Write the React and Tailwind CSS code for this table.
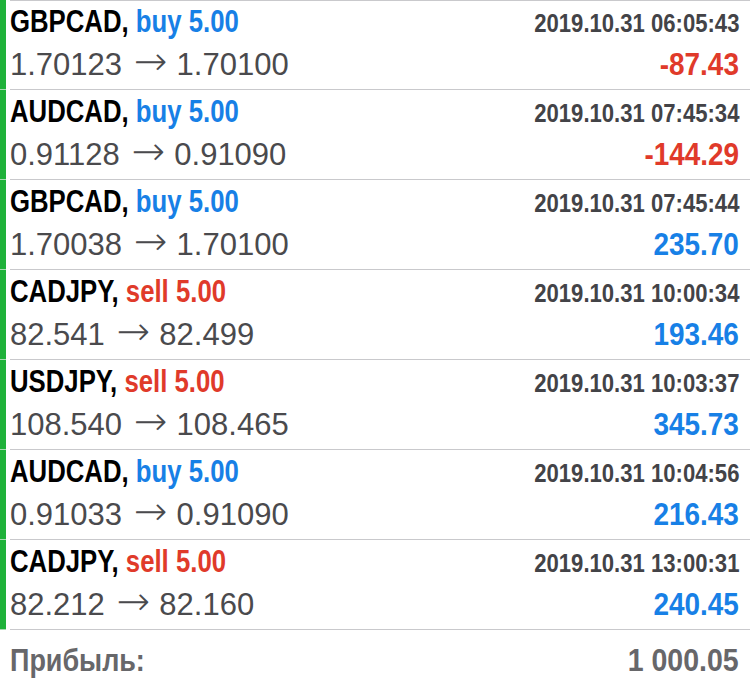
import React from 'react';

const trades = [
  { sym: 'GBPCAD', side: 'buy', open: '1.70123', close: '1.70100', time: '2019.10.31 06:05:43', profit: '-87.43' },
  { sym: 'AUDCAD', side: 'buy', open: '0.91128', close: '0.91090', time: '2019.10.31 07:45:34', profit: '-144.29' },
  { sym: 'GBPCAD', side: 'buy', open: '1.70038', close: '1.70100', time: '2019.10.31 07:45:44', profit: '235.70' },
  { sym: 'CADJPY', side: 'sell', open: '82.541', close: '82.499', time: '2019.10.31 10:00:34', profit: '193.46' },
  { sym: 'USDJPY', side: 'sell', open: '108.540', close: '108.465', time: '2019.10.31 10:03:37', profit: '345.73' },
  { sym: 'AUDCAD', side: 'buy', open: '0.91033', close: '0.91090', time: '2019.10.31 10:04:56', profit: '216.43' },
  { sym: 'CADJPY', side: 'sell', open: '82.212', close: '82.160', time: '2019.10.31 13:00:31', profit: '240.45' },
];

// bold "condensed" look: Liberation Sans Bold squeezed horizontally
const bold = "font-['Liberation_Sans',Arial,sans-serif] font-bold whitespace-nowrap";

const TradeRow = ({ t }) => {
  const loss = t.profit.startsWith('-');
  return (
    <div className="flex h-[90px]">
      <div className="w-[6px] shrink-0 bg-[#1fb23a] border-b border-[#a6dcb0]" />
      <div className="flex-1 ml-[4px] border-b border-[#c9c9cc] pr-[11px]">
        <div className="flex items-baseline justify-between leading-[42px] pt-[1px]">
          <span className={`${bold} inline-block origin-left scale-x-[0.83] text-[31px] text-black`}>
            {t.sym},{' '}
            <span className={t.side === 'buy' ? 'text-[#1780e6]' : 'text-[#e03a2a]'}>{t.side} 5.00</span>
          </span>
          <span className={`${bold} inline-block origin-right scale-x-[0.85] text-[26px] text-[#434347]`}>{t.time}</span>
        </div>
        <div className="flex items-baseline justify-between leading-[42px]">
          <div className="font-['Liberation_Sans',Arial,sans-serif] text-[31px] text-[#4a4a4d] whitespace-nowrap">
            {t.open}
            <span className="font-['DejaVu_Sans',sans-serif] text-[40px] font-extralight leading-[0] ml-[12px] mr-[9px]">→</span>
            {t.close}
          </div>
          <span className={`${bold} inline-block origin-right scale-x-[0.9] text-[31px] ${loss ? 'text-[#e03a2a]' : 'text-[#1780e6]'}`}>{t.profit}</span>
        </div>
      </div>
    </div>
  );
};

export default function App() {
  return (
    <div className="w-[750px] h-[691px] bg-white overflow-hidden">
      <div className="border-t border-[#c9c9cc] ml-[10px]" />
      <div className="-mt-px">
        {trades.map((t, i) => (
          <TradeRow key={i} t={t} />
        ))}
      </div>
      <div className="flex items-baseline justify-between pl-[10px] pr-[11px] pt-[10px] leading-[42px] text-[31px] text-[#67676a]">
        <span className={`${bold} inline-block origin-left scale-x-[0.87]`}>Прибыль:</span>
        <span className={`${bold} inline-block origin-right scale-x-[0.92]`}>1 000.05</span>
      </div>
    </div>
  );
}
